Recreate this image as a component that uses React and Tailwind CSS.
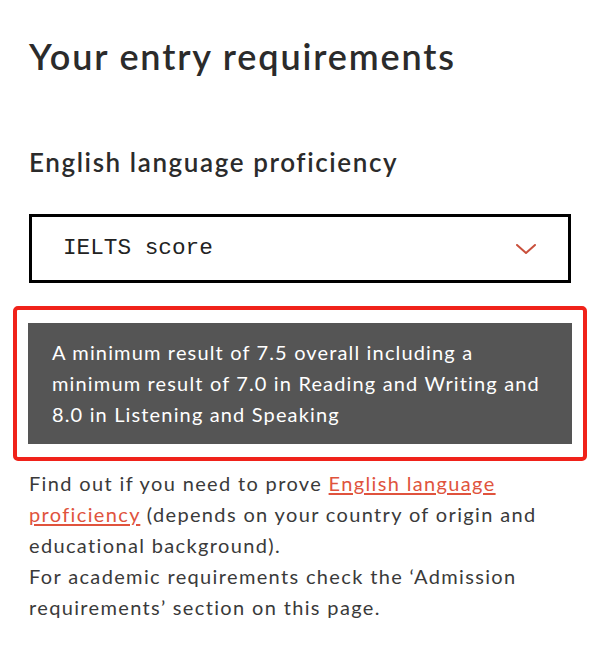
import React from 'react';

const Chevron = () => (
  <svg width="20" height="10" viewBox="0 0 20 10" fill="none" className="shrink-0">
    <path d="M1 1l9 8 9-8" stroke="#c9503c" strokeWidth="2" strokeLinecap="round" strokeLinejoin="round" />
  </svg>
);

const App = () => {
  return (
    <div className="min-h-[652px] w-[600px] bg-white font-['Lato',sans-serif] text-[#333]">
      <div className="pl-[29px] pr-[28px] pt-[34px]">
        <h1 className="text-[36px] leading-[44px] font-semibold tracking-[1.85px] text-[#2b2b2b]">
          Your entry requirements
        </h1>

        <h2 className="mt-[68px] text-[26px] leading-[32px] font-semibold tracking-[1.6px] text-[#2b2b2b]">
          English language proficiency
        </h2>

        <div className="mt-[36px] flex h-[69px] w-[542px] items-center justify-between border-[3px] border-black pl-[31px] pr-[32px]">
          <span className="font-['Liberation_Mono',monospace] text-[22.7px] text-[#222]">IELTS score</span>
          <Chevron />
        </div>
      </div>

      <div className="mx-[13px] mt-[23px] rounded-[5px] border-4 border-[#f0221a] px-[11px] py-[13px]">
        <div className="bg-[#555555] px-[24px] py-[14px] text-[20px] leading-[31px] tracking-[1.15px] text-white">
          A minimum result of 7.5 overall including a minimum result of 7.0 in Reading and Writing and 8.0 in
          Listening and Speaking
        </div>
      </div>

      <div className="pl-[29px] pr-[40px] mt-[7px] text-[20px] leading-[31px] tracking-[1.35px] text-[#3a3a3a]">
        <p>
          Find out if you need to prove{' '}
          <a href="#" className="text-[#e0533d] underline underline-offset-2">
            English language proficiency
          </a>{' '}
          (depends on your country of origin and educational background).
        </p>
        <p>For academic requirements check the ‘Admission requirements’ section on this page.</p>
      </div>
    </div>
  );
};

export default App;
